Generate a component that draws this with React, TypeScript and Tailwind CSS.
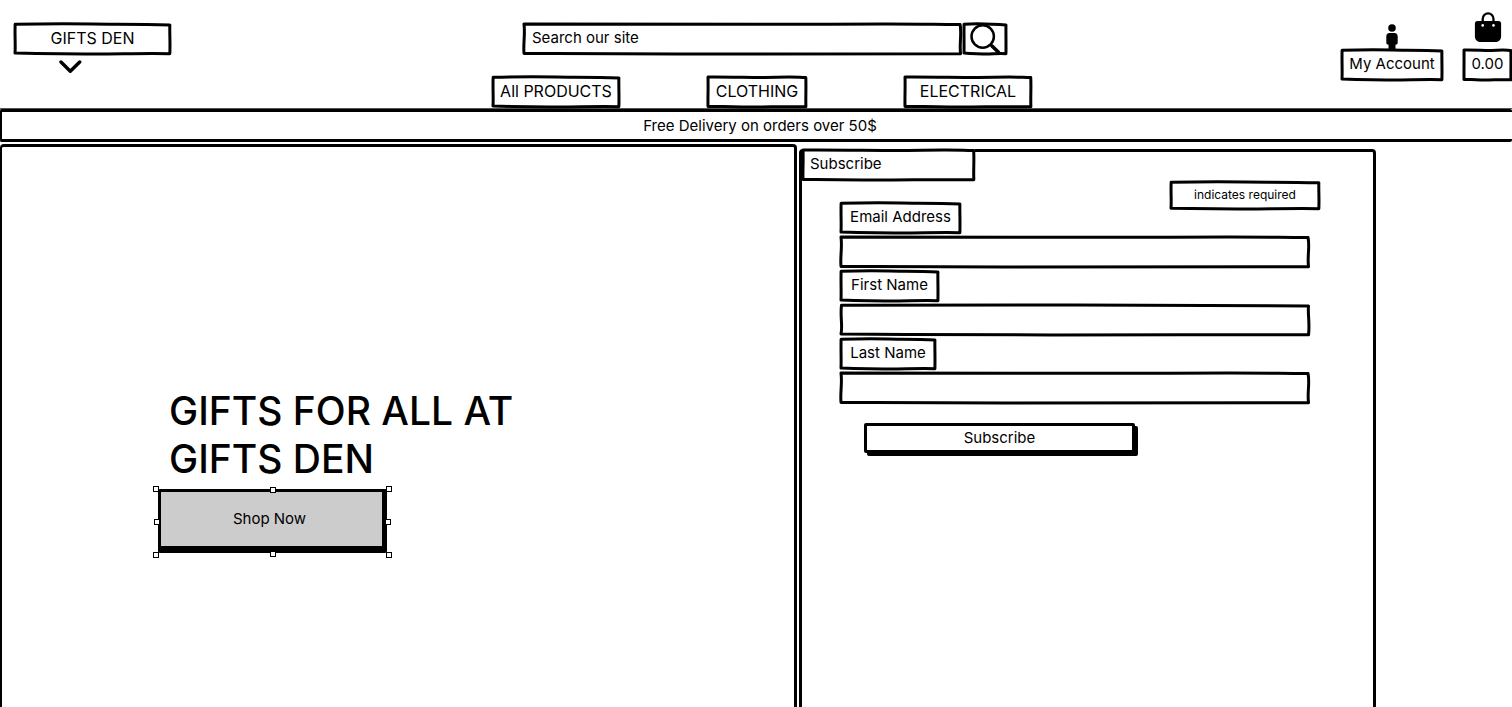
import type { ReactNode } from "react";

const outlines = {
  a: "M0.1 1 C20 -1 35 -1 50 0 S80 0 99.9 3 C99.700 30 100.200 60 99.9 99 C80 97 65 101 45 100 S15 98 0 97 C0.400 70 -0.200 40 0.1 1 Z",
  b: "M0 0 C25 -1 50 3 70 1 S90 1 99.8 2 C100.200 35 99.600 65 99.9 99 C75 98 55 101 35 100 S10 98 0 98 C-0.200 65 0.300 35 0 0 Z",
};

function Outline({ kind = "a" }: { kind?: "a" | "b" }) {
  return (
    <svg
      aria-hidden="true"
      viewBox="0 0 100 100"
      preserveAspectRatio="none"
      className="pointer-events-none absolute inset-px h-[calc(100%-2px)] w-[calc(100%-2px)] overflow-visible"
    >
      <path
        d={outlines[kind]}
        fill="none"
        stroke="#000"
        strokeWidth="3"
        strokeLinejoin="round"
        vectorEffect="non-scaling-stroke"
      />
    </svg>
  );
}

const box = "relative flex h-8 items-center bg-white pb-0.5 whitespace-nowrap";

function NavLink({ children, className, kind }: { children: ReactNode; className: string; kind?: "a" | "b" }) {
  return (
    <a href="#" className={`${box} justify-center text-base leading-5 ${className}`}>
      {children}
      <Outline kind={kind} />
    </a>
  );
}

function Field({ id, kind, type = "text" }: { id: string; kind?: "a" | "b"; type?: string }) {
  return (
    <div className="relative mr-[10px] h-8">
      <input id={id} type={type} className="h-full w-full bg-transparent px-2 outline-none" />
      <Outline kind={kind} />
    </div>
  );
}

const handles = [
  "-left-[5px] -top-[3px]",
  "left-1/2 -ml-[3px] -top-[2px]",
  "-right-[5px] -top-[3px]",
  "-left-1 top-1/2 -mt-[2px]",
  "-right-1 top-1/2 -mt-[2px]",
  "-left-[5px] -bottom-[5px]",
  "left-1/2 -ml-[3px] -bottom-1",
  "-right-[5px] -bottom-[5px]",
];

export default function App() {
  return (
    <div className="flex min-h-screen flex-col overflow-x-hidden bg-white font-['Inter','Liberation_Sans',sans-serif] text-[15px] leading-5 text-black">
      <header className="grid h-[108px] grid-cols-[492fr_540fr_480fr]">
        <div className="pt-[23px] pl-[14px]">
          <a href="#" className={`${box} w-[157px] justify-center text-base leading-5`}>
            GIFTS DEN
            <Outline />
          </a>
          <button type="button" aria-label="Open menu" className="mt-1 ml-11 block">
            <svg width="24" height="16" viewBox="0 0 24 16" fill="none" stroke="#000" strokeWidth="3.4" strokeLinecap="round" strokeLinejoin="round">
              <path d="M3 3 12.300 12.200 21.700 3" />
            </svg>
          </button>
        </div>

        <div className="flex flex-col pt-[23px]">
          <form className="mr-[25px] ml-[31px] flex" onSubmit={(e) => e.preventDefault()}>
            <div className="relative h-8 flex-1">
              <input
                type="search"
                aria-label="Search our site"
                placeholder="Search our site"
                className="h-full w-full bg-transparent px-[9px] pb-1 outline-none placeholder:text-black"
              />
              <Outline kind="b" />
            </div>
            <button type="submit" aria-label="Search" className="relative ml-px flex h-8 w-11 items-center justify-center">
              <svg width="32" height="30" viewBox="0 0 32 30" fill="none" stroke="#000">
                <circle cx="13.700" cy="12.500" r="11.200" strokeWidth="2.500" />
                <path d="M21.500 20.500 24 23" strokeWidth="2.600" />
                <path d="M22.500 21.500 30 28.700" strokeWidth="3.600" />
              </svg>
              <Outline />
            </button>
          </form>
          <nav className="mt-[21px] flex gap-[87px]">
            <NavLink className="w-32">All PRODUCTS</NavLink>
            <NavLink className="w-[100px]" kind="b">CLOTHING</NavLink>
            <NavLink className="ml-auto w-32" kind="b">ELECTRICAL</NavLink>
          </nav>
        </div>

        <div className="flex h-[81px] justify-end gap-5">
          <a href="#" className="flex w-[102px] flex-col items-center justify-end">
            <svg width="12" height="25" viewBox="0 0 12 25" fill="#000" aria-hidden="true">
              <circle cx="6" cy="4" r="3.8" />
              <path d="M3.500 9h5C10.500 9 11.700 10.500 11.700 12.500v6.300c0 1.200-.9 1.900-2.200 2V25h-7v-4.200c-1.300-.1-2.200-.8-2.200-2v-6.300C.3 10.500 1.500 9 3.500 9z" />
            </svg>
            <span className={`${box} w-full justify-center`}>
              My Account
              <Outline />
            </span>
          </a>
          <a href="#" aria-label="Basket total 0.00" className="flex w-[49px] flex-col items-center justify-end">
            <svg width="28" height="30" viewBox="0 0 28 30" className="mb-[7px]" aria-hidden="true">
              <path d="M8.700 12V7a5.400 5.600 0 0 1 10.800 0V12" fill="none" stroke="#000" strokeWidth="2.300" />
              <path d="M3.500 9h21c1.600 0 2.600 1 2.600 2.600V24c0 3.600-2 6-5.500 6H6.400C2.900 30 .9 27.600.9 24V11.600C.9 10 1.900 9 3.500 9z" fill="#000" />
              <circle cx="8.700" cy="13.400" r="1.300" fill="#fff" />
              <circle cx="19.500" cy="13.400" r="1.300" fill="#fff" />
            </svg>
            <span className={`${box} w-full justify-center`}>
              0.00
              <Outline kind="b" />
            </span>
          </a>
        </div>
      </header>

      <div className="border-t border-[#555]">
        <p className="flex h-[33px] items-center justify-center rounded-xs border-y-3 border-l-2 border-black pl-[6px]">
          Free Delivery on orders over 50$
        </p>
      </div>

      <main className="mt-0.5 grid flex-1 grid-cols-[797fr_577fr_134fr] gap-x-0.5">
        <section className="rounded-t-sm border-3 border-b-0 border-l-2 border-black pt-60 pl-[156px]">
          <h1 className="ml-[11px] text-[39px] leading-12 font-medium">
            GIFTS FOR ALL AT
            <br />
            GIFTS DEN
          </h1>
          <div className="relative mt-[6px] h-16 w-[229px]">
            <button
              type="button"
              className="h-full w-full rounded-xs border-t-3 border-r-[5px] border-b-[7px] border-l-3 border-black bg-[#ccc] pr-1"
            >
              Shop Now
            </button>
            {handles.map((place) => (
              <span key={place} className={`absolute size-[6px] border border-black bg-white ${place}`} />
            ))}
          </div>
        </section>

        <section className="mt-[5px] rounded-t-sm border-3 border-b-0 border-black">
          <h2 className={`${box} -mt-[3px] w-[173px] pl-2`}>
            Subscribe
            <Outline kind="b" />
          </h2>
          <form className="flex flex-col gap-0.5 pr-[53px] pl-[38px]" onSubmit={(e) => e.preventDefault()}>
            <div className="flex h-[53px] items-start justify-between">
              <label htmlFor="email" className={`${box} w-[121px] justify-center self-end`}>
                Email Address
                <Outline />
              </label>
              <p className="relative flex h-[29px] w-[150px] items-center justify-center pb-0.5 text-xs">
                indicates required
                <Outline />
              </p>
            </div>
            <Field id="email" type="email" kind="b" />
            <label htmlFor="first-name" className={`${box} w-[99px] justify-center`}>
              First Name
              <Outline />
            </label>
            <Field id="first-name" />
            <label htmlFor="last-name" className={`${box} w-24 justify-center`}>
              Last Name
              <Outline />
            </label>
            <Field id="last-name" kind="b" />
            <button
              type="submit"
              className="mt-[17px] ml-6 h-[30px] w-[271px] rounded-xs border-3 border-black bg-white pb-px shadow-[3px_3px_0_#000]"
            >
              Subscribe
            </button>
          </form>
        </section>
      </main>
    </div>
  );
}
